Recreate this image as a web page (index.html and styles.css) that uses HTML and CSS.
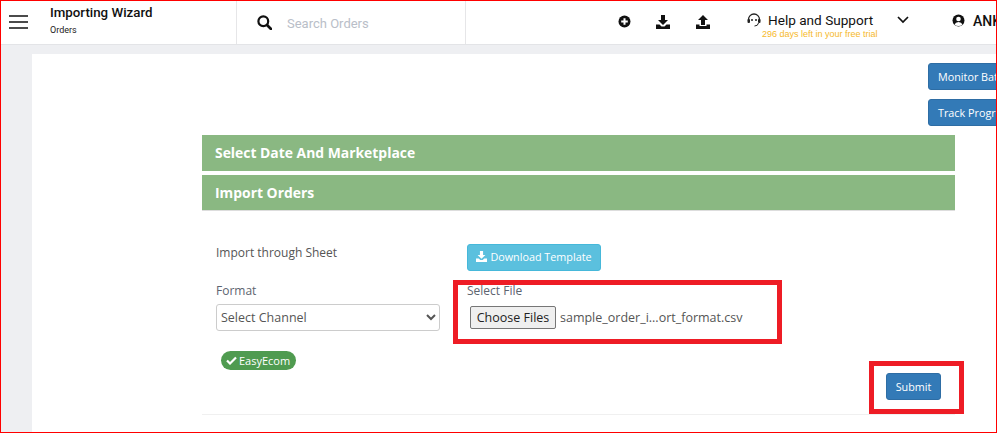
FILE: index.html
```html
<!DOCTYPE html>
<html lang="en">
<head>
<meta charset="utf-8">
<title>Importing Wizard</title>
<link rel="stylesheet" href="styles.css">
</head>
<body>
<div class="frame">
  <header class="topbar">
    <div class="menu-cell">
      <svg class="burger" width="19" height="14" viewBox="0 0 19 14"><path d="M0 1h19M0 7h19M0 13h19" stroke="#111" stroke-width="1.4"/></svg>
      <div class="titles">
        <div class="title">Importing Wizard</div>
        <div class="subtitle">Orders</div>
      </div>
    </div>
    <div class="search-cell">
      <svg class="search-icon" width="15" height="15" viewBox="0 0 15 15"><circle cx="6.3" cy="6.3" r="4.9" fill="none" stroke="#111" stroke-width="2.2"/><path d="M10 10l4 4" stroke="#111" stroke-width="2.6" stroke-linecap="round"/></svg>
      <span class="search-text">Search Orders</span>
    </div>
    <div class="actions">
      <svg class="act-plus" width="13" height="13" viewBox="0 0 13 13"><circle cx="6.5" cy="6.5" r="6" fill="#111"/><path d="M3.2 6.5h6.6M6.5 3.2v6.6" stroke="#fff" stroke-width="2"/></svg>
      <svg class="act-down" width="14" height="14" viewBox="0 0 14 14"><path d="M5 0h4v5h3L7 10 2 5h3zM0 9.5h3.5L5.500 11.500h3L10.500 9.500H14V14H0z" fill="#111"/></svg>
      <svg class="act-up" width="14" height="14" viewBox="0 0 14 14"><path d="M7 0l5 5H9v5H5V5H2zM0 9.500h3.500v1.500h7V9.500H14V14H0z" fill="#111"/></svg>
      <svg class="act-head" width="14" height="14" viewBox="0 0 14 14"><path d="M1.500 8V6.500a5.500 5.500 0 0 1 11 0V8" fill="none" stroke="#222" stroke-width="1.300"/><rect x="0.500" y="6" width="2.500" height="4" rx="1" fill="#222"/><rect x="11" y="6" width="2.500" height="4" rx="1" fill="#222"/><circle cx="5" cy="7" r="1" fill="#222"/><circle cx="9" cy="7" r="1" fill="#222"/><path d="M11.500 10Q11 13 7.500 13" fill="none" stroke="#222"/></svg>
      <div class="help">
        <div class="help-title">Help and Support</div>
        <div class="help-trial">296 days left in your free trial</div>
      </div>
      <svg class="act-chev" width="12" height="8" viewBox="0 0 12 8"><path d="M1 1l5 5 5-5" fill="none" stroke="#111" stroke-width="1.700"/></svg>
      <svg class="act-user" width="13" height="13" viewBox="0 0 13 13"><circle cx="6.500" cy="6.500" r="6" fill="#111"/><circle cx="6.500" cy="5" r="2.300" fill="#fff"/><path d="M2.500 10.500Q3.500 8 6.500 8t4 2.500Q9 12 6.500 12t-4-1.500z" fill="#fff"/></svg>
      <span class="user-name">ANKIT</span>
    </div>
  </header>
  <main class="page">
    <section class="sheet">
      <div class="tools">
        <button class="btn btn-blue tool-btn">Monitor Batches</button>
        <button class="btn btn-blue tool-btn">Track Progress</button>
      </div>
      <div class="panel">
        <h2 class="bar bar-first">Select Date And Marketplace</h2>
        <h2 class="bar bar-second">Import Orders</h2>
        <div class="panel-body">
          <div class="form-grid">
            <div class="label-sheet">Import through Sheet</div>
            <div>
              <button class="btn btn-info">
                <svg class="dl-icon" width="11" height="11" viewBox="0 0 14 14"><path d="M5 0h4v5h3L7 10 2 5h3zM0 9.500h3.500L5.500 11.500h3L10.500 9.500H14V14H0z" fill="#fff"/></svg>Download Template
              </button>
            </div>
            <div class="col-format">
              <label class="label">Format</label>
              <select class="channel"><option>Select Channel</option></select>
              <div><span class="tag">
                <svg width="11" height="9" viewBox="0 0 11 9"><path d="M1 4.500l3 3 6-6" fill="none" stroke="#fff" stroke-width="2.200"/></svg>EasyEcom
              </span></div>
            </div>
            <div class="col-file">
              <label class="label">Select File</label>
              <div class="file-row">
                <button class="choose">Choose Files</button>
                <span class="file-name">sample_order_i...ort_format.csv</span>
              </div>
            </div>
          </div>
          <div class="submit-row">
            <button class="btn btn-blue submit">Submit</button>
          </div>
        </div>
      </div>
    </section>
  </main>
  <div class="mark mark-file"></div>
  <div class="mark mark-submit"></div>
</div>
</body>
</html>
```
FILE: styles.css
```css
* { box-sizing: border-box; }
html, body { margin: 0; padding: 0; }
body { font-family: "Open Sans", sans-serif; color: #555; background: #fff; }
.frame {
  position: relative;
  width: 997px;
  height: 433px;
  border: 1px solid #f00;
  overflow: hidden;
  background: #eeeff2;
}
.topbar {
  display: flex;
  height: 44px;
  background: #fff;
  border-bottom: 1px solid #e3e4e7;
  font-family: Roboto, sans-serif;
  color: #111;
}
.menu-cell {
  display: flex;
  flex: none;
  align-items: center;
  width: 236px;
  padding-left: 8px;
  border-right: 1px solid #e6e6e8;
}
.burger { margin: 0 0 2px 0; }
.titles { margin-left: 22px; margin-bottom: 4px; }
.title { font-size: 13.300px; line-height: 16px; font-weight: 500; white-space: nowrap; }
.subtitle { font-size: 9px; line-height: 12px; margin-top: 3px; color: #222; }
.search-cell {
  display: flex;
  flex: none;
  align-items: center;
  width: 229px;
  padding: 2px 0 0 20px;
  border-right: 1px solid #e6e6e8;
}
.search-icon { margin-bottom: 2px; }
.search-text { margin-left: 15px; font-size: 13px; color: #b9bec8; }
.actions { display: flex; align-items: center; flex: none; white-space: nowrap; padding-bottom: 2px; }
.act-plus { margin-left: 152px; }
.act-down { margin-left: 25px; }
.act-up { margin-left: 26px; }
.act-head { margin-left: 37px; margin-bottom: 3px; }
.help { width: 126px; margin-left: 7px; margin-top: 8px; }
.help-title { font-size: 13.600px; line-height: 16px; color: #111; }
.help-trial { font-size: 9px; line-height: 10px; margin-top: 1px; color: #f6b92b; margin-left: -6px; font-family: "Liberation Sans", sans-serif; white-space: nowrap; }
.act-chev { margin-left: 3px; margin-bottom: 3px; }
.act-user { margin-left: 43px; margin-bottom: 3px; }
.user-name { margin-left: 8px; font-size: 14px; font-weight: 500; margin-bottom: 2px; }
.page { padding: 9px 0 0 31px; }
.sheet { background: #fff; height: 380px; width: 980px; }
.tools {
  display: flex;
  flex-direction: column;
  gap: 9px;
  padding: 9px 0 0 896px;
  height: 81px;
  overflow: hidden;
  width: 965px;
}
.btn {
  font-family: "Open Sans", sans-serif;
  border: 1px solid transparent;
  border-radius: 3px;
  color: #fff;
  font-size: 10.800px;
  line-height: 17px;
  white-space: nowrap;
  padding: 4px 9px;
}
.btn-blue { background: #337ab7; border-color: #2e6da4; }
.btn-info { background: #5bc0de; border-color: #46b8da; height: 27px; width: 134px; padding: 0 0 2px; }
.dl-icon { margin-right: 3px; vertical-align: -1px; }
.tool-btn { height: 27px; width: 100px; text-align: left; }
.panel { margin-left: 170px; width: 753px; border-bottom: 1px solid #f0f0f0; height: 280px; }
.bar {
  margin: 0;
  background: #8ab882;
  color: #fff;
  font-size: 13.900px;
  font-weight: 700;
  padding-left: 13px;
}
.bar-first { height: 36px; line-height: 36px; }
.bar-second { height: 36px; line-height: 35px; margin-top: 4px; border-bottom: 1px solid #ddd; }
.panel-body { padding: 33px 14px 0; }
.form-grid {
  display: grid;
  grid-template-columns: 251px 1fr;
  row-gap: 12px;
}
.label-sheet { color: #555; font-size: 12px; font-weight: 500; line-height: 18px; }
.label { display: block; font-size: 12px; font-weight: 500; line-height: 16px; color: #5d6470; }
.col-format .label { margin-bottom: 5px; }
.channel {
  display: block;
  width: 224px;
  height: 27px;
  padding-left: 0;
  font-family: "Open Sans", sans-serif;
  font-size: 12.500px;
  color: #555;
  background: #fff;
  border: 1px solid #ccc;
  border-radius: 3px;
}
.tag {
  display: inline-flex;
  align-items: center;
  gap: 2px;
  margin: 20px 0 0 5px;
  height: 19px;
  width: 75px;
  padding: 0 0 0 5px;
  background: #4f9b50;
  color: #fff;
  border-radius: 10px;
  font-size: 11px;
  font-weight: 500;
}
.col-file .label { margin-bottom: 7px; }
.file-row { display: flex; align-items: center; padding-left: 3px; }
.choose {
  height: 23px;
  width: 86px;
  padding: 0;
  background: #efefef;
  border: 1px solid #767676;
  border-radius: 2px;
  font-family: "Open Sans", sans-serif;
  font-size: 12.500px;
  color: #222;
}
.file-name { margin-left: 4px; font-size: 12.500px; color: #555; }
.submit-row { display: flex; justify-content: flex-end; margin-top: 3px; }
.submit { width: 55px; height: 27px; padding: 0; }
.mark { position: absolute; border: 5px solid #ee1c25; }
.mark-file { left: 452px; top: 279px; width: 329px; height: 64px; }
.mark-submit { left: 868px; top: 360px; width: 95px; height: 53px; }
```
